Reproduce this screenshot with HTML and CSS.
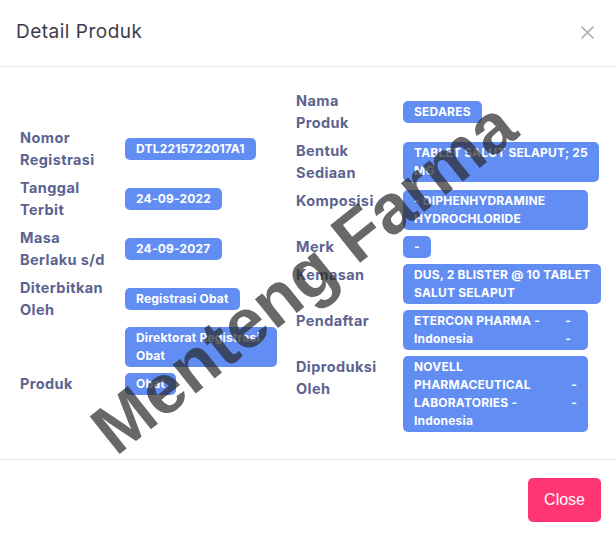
FILE: index.html
```html
<!DOCTYPE html>
<html lang="id">
<head>
<meta charset="utf-8">
<title>Detail Produk</title>
<link rel="stylesheet" href="styles.css">
</head>
<body>
<div class="modal">
  <header class="mhead">
    <h5 class="title">Detail Produk</h5>
    <button class="xbtn" aria-label="Close">
      <svg width="13" height="13" viewBox="0 0 13 13"><path d="M1 1L12 12M12 1L1 12" stroke="#a9a9b0" stroke-width="1.6" stroke-linecap="round"/></svg>
    </button>
  </header>
  <div class="mbody">
    <div class="grid gleft">
      <div class="lbl">Nomor<br>Registrasi</div>
      <div class="val"><span class="badge">DTL2215722017A1</span></div>
      <div class="lbl">Tanggal<br>Terbit</div>
      <div class="val"><span class="badge">24-09-2022</span></div>
      <div class="lbl">Masa<br>Berlaku s/d</div>
      <div class="val"><span class="badge">24-09-2027</span></div>
      <div class="lbl">Diterbitkan<br>Oleh</div>
      <div class="val"><span class="badge">Registrasi Obat</span></div>
      <div class="lbl"></div>
      <div class="val"><span class="badge full">Direktorat Registrasi<br>Obat</span></div>
      <div class="lbl">Produk</div>
      <div class="val"><span class="badge">Obat</span></div>
    </div>
    <div class="grid gright">
      <div class="lbl">Nama<br>Produk</div>
      <div class="val"><span class="badge">SEDARES</span></div>
      <div class="lbl">Bentuk<br>Sediaan</div>
      <div class="val"><span class="badge full">TABLET SALUT SELAPUT; 25<br>MG</span></div>
      <div class="lbl">Komposisi</div>
      <div class="val"><span class="badge full">- DIPHENHYDRAMINE<br>HYDROCHLORIDE</span></div>
      <div class="lbl">Merk</div>
      <div class="val"><span class="badge">-</span></div>
      <div class="lbl">Kemasan</div>
      <div class="val"><span class="badge full">DUS, 2 BLISTER @ 10 TABLET<br>SALUT SELAPUT</span></div>
      <div class="lbl">Pendaftar</div>
      <div class="val"><span class="badge full split"><span class="btxt">ETERCON PHARMA -<br>Indonesia</span><span class="bdash near">-<br>-</span></span></div>
      <div class="lbl">Diproduksi<br>Oleh</div>
      <div class="val"><span class="badge full split"><span class="btxt">NOVELL<br>PHARMACEUTICAL<br>LABORATORIES -<br>Indonesia</span><span class="bdash">-<br>-</span></span></div>
    </div>
  </div>
  <footer class="mfoot">
    <button class="btn-close">Close</button>
  </footer>
  <div class="watermark">Menteng Farma</div>
</div>
</body>
</html>
```

FILE: styles.css
```css
* { box-sizing: border-box; }
html, body { margin: 0; padding: 0; background: #ffffff; }
body { font-family: "Inter", "Noto Sans", sans-serif; }

.modal {
  position: relative;
  width: 616px;
  min-height: 536px;
  background: #ffffff;
  overflow: hidden;
}

.mhead {
  height: 67px;
  display: flex;
  align-items: center;
  justify-content: space-between;
  padding: 0 22px 2px 16px;
  border-bottom: 1px solid #e9eaef;
}
.title {
  margin: 0;
  font-family: "Inter", sans-serif;
  font-weight: 400;
  font-size: 19px;
  letter-spacing: 0.5px;
  line-height: 1.2;
  color: #3c3d4b;
}
.xbtn {
  display: flex;
  padding: 0;
  border: 0;
  background: none;
}

.mbody {
  display: flex;
  align-items: center;
  gap: 19px;
  padding: 23px 0 27px 20px;
}

.grid {
  display: grid;
  row-gap: 6px;
}
.gleft { grid-template-columns: 105px 152px; }
.gright { grid-template-columns: 107px 185px; }

.lbl {
  align-self: start;
  font-family: "Inter", sans-serif;
  font-weight: 700;
  font-size: 14.5px;
  letter-spacing: 0.4px;
  line-height: 22px;
  color: #5c6390;
}
.val {
  align-self: center;
  display: flex;
  align-items: flex-start;
}

.badge {
  display: block;
  padding: 2px 11px;
  border-radius: 5px;
  background: #628ef4;
  color: #ffffff;
  font-family: "Inter", sans-serif;
  font-weight: 700;
  font-size: 12px;
  letter-spacing: 0.2px;
  line-height: 18px;
  white-space: nowrap;
}
.badge.full { flex: 1; }
.badge.split {
  display: flex;
  align-items: center;
  justify-content: space-between;
}
.bdash { text-align: right; }
.bdash.near { margin-right: 6px; }

.mfoot {
  display: flex;
  justify-content: flex-end;
  padding: 18px 15px;
  border-top: 1px solid #e9eaef;
}
.btn-close {
  height: 44px;
  padding: 0 16px;
  border: 0;
  border-radius: 5px;
  background: #fe3573;
  color: #ffffff;
  font-family: "Liberation Sans", Arial, sans-serif;
  font-size: 16px;
  line-height: 20px;
}

.watermark {
  position: absolute;
  left: 116px;
  top: 398px;
  font-family: "Liberation Sans", Arial, sans-serif;
  font-weight: 700;
  font-size: 70px;
  line-height: 1;
  white-space: nowrap;
  color: rgba(40, 40, 40, 0.7);
  transform-origin: 0 59px;
  transform: rotate(-38.5deg);
  pointer-events: none;
}
```
